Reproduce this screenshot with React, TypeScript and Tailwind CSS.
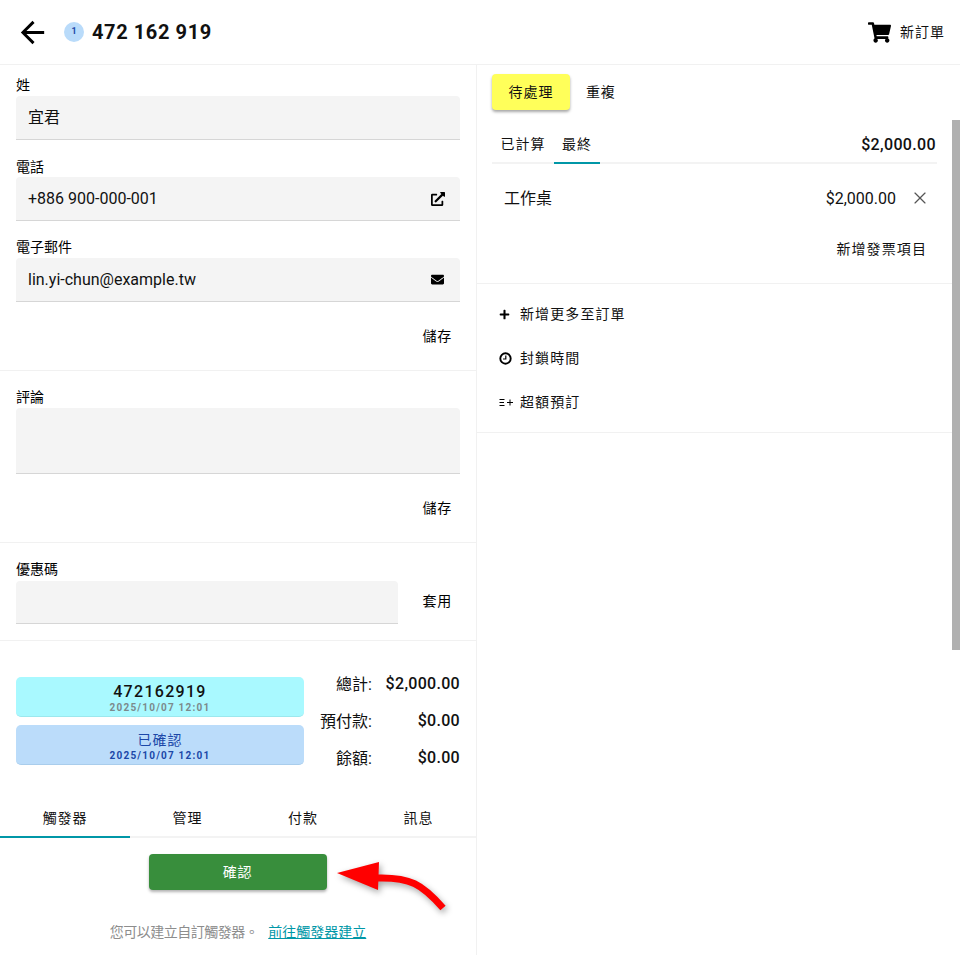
import { X } from 'lucide-react';
import { FaShoppingCart, FaExternalLinkAlt, FaEnvelope, FaPlus } from 'react-icons/fa';

const FONT = "font-['Roboto','Noto_Sans_CJK_TC',sans-serif]";

function Field({
  label,
  value,
  icon,
  labelClass = 'h-[32px]',
  fieldClass = 'h-[44px]',
}: {
  label: string;
  value?: string;
  icon?: React.ReactNode;
  labelClass?: string;
  fieldClass?: string;
}) {
  return (
    <div>
      <div className={`flex items-end text-[14px] leading-[20px] text-black ${labelClass}`}>{label}</div>
      <div
        className={`flex items-center justify-between rounded-t-[4px] border-b border-[#d6d6d6] bg-[#f4f4f4] pl-3 pr-[15px] text-[16px] text-[#111] ${fieldClass}`}
      >
        <span>{value}</span>
        {icon}
      </div>
    </div>
  );
}

function SaveRow() {
  return (
    <div className="flex h-[68px] items-center justify-end pr-[8px] text-[14px] tracking-[0.8px] text-black">儲存</div>
  );
}

function StatusCard({ title, date, tone }: { title: string; date: string; tone: 'cyan' | 'blue' }) {
  const box = tone === 'cyan' ? 'bg-[#a9f9ff] border-[#9ce8ee]' : 'bg-[#bbdcfa] border-[#a9cdec]';
  const head = tone === 'cyan' ? 'text-[16px] font-medium tracking-[1.3px] text-[#111]' : 'text-[14px] text-[#1c48a8] tracking-[1px]';
  const sub = tone === 'cyan' ? 'text-[#7c8a8c]' : 'text-[#1c48a8]';
  return (
    <div className={`flex h-[40px] flex-col items-center justify-center rounded-[5px] border-b pt-[4px] ${box}`}>
      <div className={`leading-[18px] ${head}`}>{title}</div>
      <div className={`mt-[1px] text-[10px] font-bold leading-[12px] tracking-[1.2px] ${sub}`}>{date}</div>
    </div>
  );
}

function Total({ label, value }: { label: string; value: string }) {
  return (
    <div className="flex h-[37px] items-center justify-end">
      <span className="w-[52px] whitespace-nowrap pt-[2px] text-right text-[16px] text-[#111]">{label}</span>
      <span className="w-[88px] text-right text-[16px] font-medium tracking-[0.3px] text-[#111]">{value}</span>
    </div>
  );
}

function Action({ icon, label }: { icon: React.ReactNode; label: string }) {
  return (
    <div className="flex h-[44px] items-center text-[14px] text-[#111]">
      <span className="flex w-[25px] justify-start pl-[4px]">{icon}</span>
      <span className="tracking-[1.1px]">{label}</span>
    </div>
  );
}

export default function App() {
  return (
    <div className={`relative h-[955px] w-[960px] overflow-hidden bg-white ${FONT}`}>
      {/* Header */}
      <header className="flex h-[65px] items-center justify-between border-b border-[#f1f1f1] pl-[15px] pr-[15px]">
        <div className="flex items-center">
          <svg width="35" height="35" viewBox="0 0 24 24" className="text-black">
            <path fill="currentColor" d="M20 11H7.83l5.59-5.59L12 4l-8 8 8 8 1.41-1.41L7.83 13H20v-2z" />
          </svg>
          <span className="ml-[14px] flex h-5 w-5 items-center justify-center rounded-full bg-[#b9dbfa] text-[9px] font-bold text-[#1c48a8]">
            1
          </span>
          <span className="ml-2 text-[20px] font-bold tracking-[0.6px] text-[#111]">472 162 919</span>
        </div>
        <div className="flex items-center">
          <FaShoppingCart size={23} className="text-black" />
          <span className="ml-[9px] text-[14px] tracking-[1px] text-[#111]">新訂單</span>
        </div>
      </header>

      <div className="flex">
        {/* Left column */}
        <div className="h-[890px] w-[477px] border-r border-[#f1f1f1]">
          <div className="px-4">
            <Field label="姓" value="宜君" labelClass="h-[31px] pb-[1px]" />
            <Field
              label="電話"
              value="+886 900-000-001"
              labelClass="h-[37px]"
              icon={<FaExternalLinkAlt size={14} className="text-black" />}
            />
            <Field
              label="電子郵件"
              value="lin.yi-chun@example.tw"
              labelClass="h-[37px] pb-[1px]"
              icon={<FaEnvelope size={13} className="mr-[1px] text-black" />}
            />
            <SaveRow />
          </div>
          <div className="border-t border-[#f1f1f1] px-4">
            <Field label="評論" labelClass="h-[37px] pb-[1px]" fieldClass="h-[66px]" />
            <SaveRow />
          </div>
          <div className="border-t border-[#f1f1f1] px-4">
            <div className="flex items-end">
              <div className="w-[382px]">
                <Field label="優惠碼" labelClass="h-[38px] pb-[2px]" fieldClass="h-[43px]" />
              </div>
              <div className="mb-[2px] flex h-[41px] flex-1 items-center justify-end pr-[8px] text-[14px] tracking-[0.8px] text-black">套用</div>
            </div>
          </div>
          <div className="mt-4 flex border-t border-[#f1f1f1] px-4 pt-[24px]">
            <div className="mt-[12px] flex w-[288px] flex-col gap-[8px]">
              <StatusCard tone="cyan" title="472162919" date="2025/10/07 12:01" />
              <StatusCard tone="blue" title="已確認" date="2025/10/07 12:01" />
            </div>
            <div className="flex-1">
              <Total label="總計:" value="$2,000.00" />
              <Total label="預付款:" value="$0.00" />
              <Total label="餘額:" value="$0.00" />
            </div>
          </div>

          {/* Tabs */}
          <div className="mt-[24px] flex h-[38px] border-b-2 border-[#f3f3f3] text-[14px] tracking-[0.9px] text-[#111]">
            <div className="-mb-[2px] flex w-[130px] items-center justify-center border-b-2 border-[#0097a7]">觸發器</div>
            <div className="flex w-[115px] items-center justify-center">管理</div>
            <div className="flex w-[116px] items-center justify-center">付款</div>
            <div className="flex w-[115px] items-center justify-center">訊息</div>
          </div>

          <div className="flex justify-center pt-[16px]">
            <button className="ml-[-1px] flex h-[36px] w-[178px] items-center justify-center rounded-[4px] bg-[#388e3c] text-[14px] tracking-[0.8px] text-white shadow-[0_2px_3px_rgba(0,0,0,0.3)]">
              確認
            </button>
          </div>
          <div className="mt-[32px] flex justify-center text-[14px] leading-[20px]">
            <span className="tracking-[-0.5px] text-[#8d8d8d]">您可以建立自訂觸發器。</span>
            <a className="ml-[10px] text-[#0097a7] underline">前往觸發器建立</a>
          </div>
        </div>

        {/* Right column */}
        <div className="flex-1 pr-[8px]">
          <div className="flex items-center px-[15px] pt-[9px]">
            <div className="flex h-[36px] w-[78px] items-center justify-center rounded-[4px] bg-[#ffff5a] text-[14px] tracking-[1px] text-[#111] shadow-[0_2px_3px_rgba(0,0,0,0.35)]">
              待處理
            </div>
            <div className="ml-4 text-[14px] tracking-[0.8px] text-[#111]">重複</div>
          </div>
          <div className="mx-[15px] mt-[8px] flex h-[46px] items-center justify-between border-b-2 border-[#f3f3f3] pr-[1px]">
            <div className="flex h-full text-[14px] tracking-[1px] text-[#111]">
              <div className="flex w-[62px] items-center justify-center pt-[9px]">已計算</div>
              <div className="-mb-[2px] flex w-[46px] items-center justify-center border-b-2 border-[#0097a7] pt-[9px]">最終</div>
            </div>
            <span className="pt-[9px] text-[16px] font-medium tracking-[0.35px] text-[#111]">$2,000.00</span>
          </div>
          <div className="flex h-[68px] items-center justify-between pl-[27px] pr-[22px] pt-[2px]">
            <span className="text-[16px] text-[#111]">工作桌</span>
            <div className="flex items-center">
              <span className="text-[16px] text-[#111]">$2,000.00</span>
              <X size={20} strokeWidth={1.4} className="ml-[14px] mt-[-3px] text-[#555]" />
            </div>
          </div>
          <div className="flex h-[35px] items-center justify-end pr-[25px] text-[14px] tracking-[1.1px] text-[#111]">
            新增發票項目
          </div>
          <div className="mt-[16px] border-y border-[#f1f1f1] px-[18px] py-[8px]">
            <Action icon={<FaPlus size={11} className="text-black" />} label="新增更多至訂單" />
            <Action
              icon={
                <svg width="13" height="13" viewBox="0 0 13 13" fill="none" stroke="black">
                  <circle cx="6.5" cy="6.5" r="5.2" strokeWidth="1.9" />
                  <path d="M6.8 3.5V7H4" strokeWidth="1.2" />
                </svg>
              }
              label="封鎖時間"
            />
            <Action
              icon={
                <svg width="15" height="9" viewBox="0 0 15 9" fill="none" stroke="black" strokeWidth="1">
                  <path d="M0.5 1.5H5.5M0.5 4.5H5M0.5 7.5H5.5M8 4.5H14M11 1.5V7.5" />
                </svg>
              }
              label="超額預訂"
            />
          </div>
        </div>
      </div>

      {/* Scrollbar */}
      <div className="absolute right-0 top-[120px] h-[530px] w-[8px] bg-[#b0b0b0]" />

      {/* Annotation arrow */}
      <svg className="absolute left-[330px] top-[850px] drop-shadow-[2px_3px_3px_rgba(0,0,0,0.35)]" width="125" height="70" viewBox="0 0 125 70">
        <path d="M47 28 C80 27 92 34 113 58" fill="none" stroke="#ff0000" strokeWidth="7" />
        <path d="M7 23 L49 12 L48 40 Z" fill="#ff0000" />
      </svg>
    </div>
  );
}
